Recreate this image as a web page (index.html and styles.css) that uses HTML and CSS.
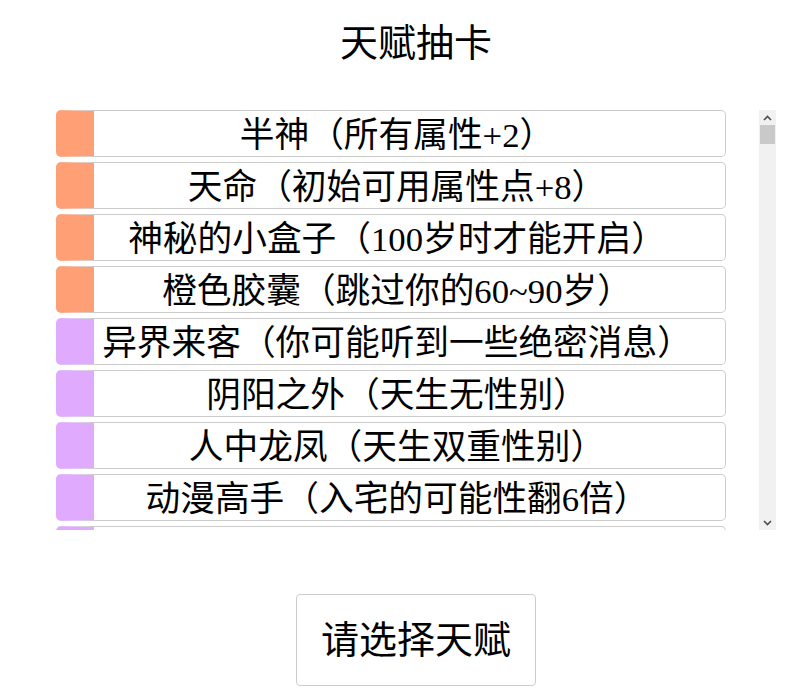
FILE: index.html
```html
<!DOCTYPE html>
<html lang="zh-CN">
<head>
<meta charset="utf-8">
<title>天赋抽卡</title>
<link rel="stylesheet" href="styles.css">
</head>
<body>
<main class="page">
  <h1 class="title">天赋抽卡</h1>
  <div class="list-frame">
    <div class="talents">
      <ul class="talent-list">
        <li class="talent orange">半神（所有属性+2）</li>
        <li class="talent orange">天命（初始可用属性点+8）</li>
        <li class="talent orange">神秘的小盒子（100岁时才能开启）</li>
        <li class="talent orange">橙色胶囊（跳过你的60~90岁）</li>
        <li class="talent purple">异界来客（你可能听到一些绝密消息）</li>
        <li class="talent purple">阴阳之外（天生无性别）</li>
        <li class="talent purple">人中龙凤（天生双重性别）</li>
        <li class="talent purple">动漫高手（入宅的可能性翻6倍）</li>
        <li class="talent purple">天赋异禀（初始可用属性点+5）</li>
        <li class="talent purple">神之祝福（颜值+3）</li>
      </ul>
    </div>
    <div class="scrollbar" aria-hidden="true">
      <div class="sb-button">
        <svg width="9" height="6" viewBox="0 0 9 6"><path d="M1 5 L4.5 1.5 L8 5" fill="none" stroke="#505050" stroke-width="1.7"/></svg>
      </div>
      <div class="sb-thumb"></div>
      <div class="sb-track"></div>
      <div class="sb-button">
        <svg width="9" height="6" viewBox="0 0 9 6"><path d="M1 1 L4.5 4.5 L8 1" fill="none" stroke="#505050" stroke-width="1.7"/></svg>
      </div>
    </div>
  </div>
  <button class="choose" type="button">请选择天赋</button>
</main>
</body>
</html>
```
FILE: styles.css
```css
html, body {
  margin: 0;
  padding: 0;
  background: #ffffff;
}

body {
  font-family: "Liberation Serif", "Noto Sans CJK SC", serif;
  color: #000000;
}

.page {
  width: 720px;
  margin-left: 56px;
  display: flex;
  flex-direction: column;
  align-items: center;
}

.title {
  margin: 20px 0 44px;
  font-size: 38px;
  line-height: 46px;
  font-weight: normal;
  text-align: center;
}

.list-frame {
  display: flex;
  width: 720px;
  height: 420px;
  flex-shrink: 0;
}

.talents {
  flex: 1;
  min-width: 0;
  overflow: hidden;
}

.talent-list {
  list-style: none;
  margin: 0;
  padding: 0;
}

.talent {
  width: 670px;
  height: 47px;
  box-sizing: border-box;
  margin-bottom: 5px;
  padding-right: 25px;
  border: 1px solid #cccccc;
  border-left: 38px solid #cccccc;
  border-radius: 5px;
  font-size: 34.7px;
  line-height: 49px;
  text-align: center;
  white-space: nowrap;
  overflow: hidden;
}

.orange {
  border-left-color: #ff9f76;
}

.purple {
  border-left-color: #e0aaff;
}

.scrollbar {
  width: 17px;
  display: flex;
  flex-direction: column;
  background: #f1f1f1;
}

.sb-button {
  height: 15px;
  display: flex;
  align-items: center;
  justify-content: center;
  flex-shrink: 0;
}

.sb-thumb {
  height: 19px;
  margin: 0 1px;
  background: #c9c9c9;
  flex-shrink: 0;
}

.sb-track {
  flex: 1;
}

.choose {
  margin-top: 64px;
  padding: 0 24px;
  height: 92px;
  font-family: "Liberation Serif", "Noto Sans CJK SC", serif;
  font-size: 38px;
  line-height: 44px;
  background: #ffffff;
  color: #000000;
  border: 1px solid #cccccc;
  border-radius: 4px;
}
```
